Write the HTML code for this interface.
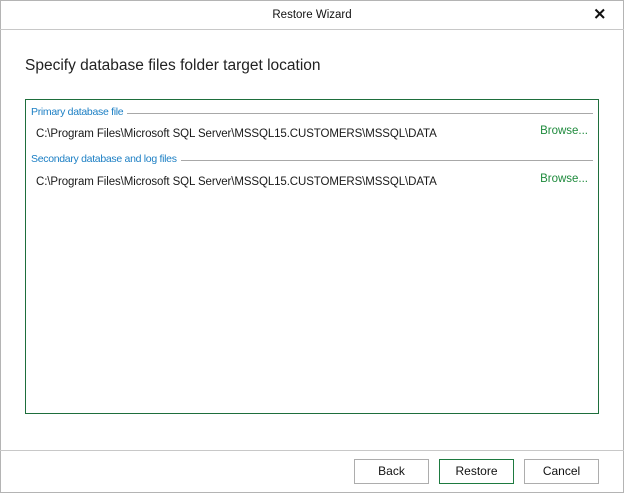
<!DOCTYPE html>
<html><head><style>
*{margin:0;padding:0;box-sizing:border-box}
body{width:624px;height:493px;background:#fff;font-family:"Liberation Sans",sans-serif;position:relative;overflow:hidden;color:#111}
.win{position:absolute;left:0;top:0;width:624px;height:493px;border:1px solid #b4b4b4}
.title{position:absolute;left:0;top:0;width:624px;height:30px;border-bottom:1px solid #c8c8c8;text-align:center;font-size:11.5px;line-height:30px}
.x{position:absolute;left:593px;top:7px;width:14px;height:14px}
.h{position:absolute;left:25px;top:57px;font-size:15.5px;color:#222}
.panel{position:absolute;left:25px;top:99px;width:574px;height:315px;border:1px solid #1e6e3c}
.lbl{position:absolute;left:5px;font-size:10.5px;letter-spacing:-0.3px;color:#1c7fc4;background:#fff;padding-right:4px}
.line{position:absolute;right:5px;height:1px;background:#a8a8a8}
.p{position:absolute;left:10px;font-size:11.5px;letter-spacing:-0.1px;color:#1a1a1a}
.b{position:absolute;right:10px;font-size:11.5px;color:#1e8a3c}
.sep{position:absolute;left:0;top:450px;width:624px;height:1px;background:#c8c8c8}
.btn{position:absolute;top:459px;width:75px;height:25px;border:1px solid #adadad;font-size:12px;text-align:center;line-height:23px;background:#fff}
</style></head><body>
<div class="win"></div>
<div class="title">Restore Wizard</div>
<svg class="x" viewBox="0 0 14 14"><path d="M2.5 2.5L11 11M11 2.5L2.5 11" stroke="#111" stroke-width="2"/></svg>
<div class="h">Specify database files folder target location</div>
<div class="panel">
<div class="line" style="left:96px;top:13px"></div>
<div class="lbl" style="top:6px">Primary database file</div>
<div class="p" style="top:28px">C:\Program Files\Microsoft SQL Server\MSSQL15.CUSTOMERS\MSSQL\DATA</div>
<div class="b" style="top:25px">Browse...</div>
<div class="line" style="left:150px;top:60px"></div>
<div class="lbl" style="top:53px">Secondary database and log files</div>
<div class="p" style="top:76px">C:\Program Files\Microsoft SQL Server\MSSQL15.CUSTOMERS\MSSQL\DATA</div>
<div class="b" style="top:73px">Browse...</div>
</div>
<div class="sep"></div>
<div class="btn" style="left:354px">Back</div>
<div class="btn" style="left:439px;border-color:#1e7a40">Restore</div>
<div class="btn" style="left:524px">Cancel</div>
</body></html>
